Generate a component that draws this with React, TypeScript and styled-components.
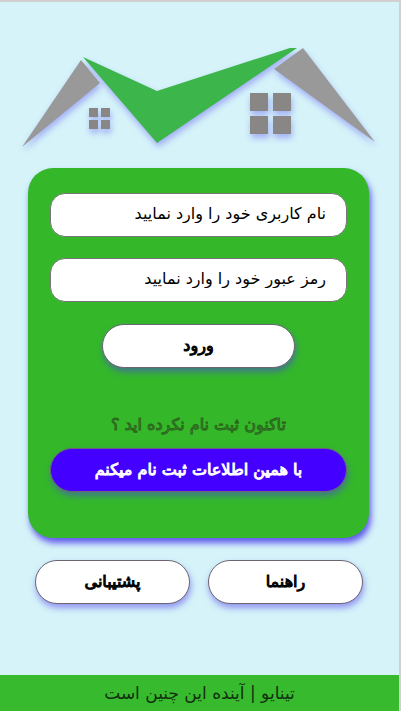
import React from "react";
import styled, { createGlobalStyle } from "styled-components";

const GlobalStyle = createGlobalStyle`
  *, *::before, *::after { box-sizing: border-box; }
  body { margin: 0; background: #d5f3f9; }
  body, button, input { font-family: "DejaVu Sans", sans-serif; }
`;

const Page = styled.div`
  min-height: 100vh;
  display: flex;
  flex-direction: column;
  border-top: 2px solid #d3cfd0;
  border-right: 2px solid #d3cfd0;
  background: #d5f3f9;
`;

const Logo = styled.svg`
  display: block;
  width: 100%;
  padding: 0 24px 0 22px;
  margin-top: 44px;
  overflow: visible;
  filter: drop-shadow(1px 4px 3px rgba(88, 70, 240, 0.4));
`;

const Main = styled.main`
  flex: 1;
  padding: 0 30px 0 28px;
`;

const Card = styled.form`
  display: flex;
  flex-direction: column;
  align-items: center;
  margin-top: 20px;
  padding: 25px 22px 46px;
  border-radius: 25px;
  background: #34b82a;
  box-shadow: 2px 5px 6px rgba(70, 50, 235, 0.8);
`;

const Fields = styled.div`
  display: flex;
  flex-direction: column;
  gap: 21px;
  width: 100%;
  margin-bottom: 22px;
`;

const Field = styled.input`
  width: 100%;
  height: 44px;
  padding: 0 20px 4px;
  border: 1px solid #767676;
  border-radius: 15px;
  background: #fff;
  color: #000;
  font-size: 16px;
  &::placeholder { color: #000; opacity: 1; }
`;

const Button = styled.button<{ $primary?: boolean; $width?: string }>`
  width: ${(p) => p.$width ?? "100%"};
  height: 44px;
  padding: 0 0 2px;
  border: 1px solid #6d6570;
  border-radius: 22px;
  background: ${(p) => (p.$primary ? "#4400ff" : "#fff")};
  color: ${(p) => (p.$primary ? "#fff" : "#000")};
  font-size: 16px;
  -webkit-text-stroke: 1px currentColor;
  white-space: nowrap;
  box-shadow: 1px 4px 6px rgba(80, 60, 235, 0.5);
`;

const Question = styled.p`
  margin: 42px 0 8px;
  line-height: 30px;
  font-size: 16px;
  color: #34a02a;
  -webkit-text-stroke: 1px #2c641d;
`;

const Links = styled.nav`
  display: flex;
  gap: 18px;
  margin: 22px 6px 24px 7px;
`;

const Footer = styled.footer`
  height: 36px;
  line-height: 36px;
  background: #38ba2f;
  color: #10300d;
  font-size: 17px;
  text-align: center;
`;

export default function App() {
  return (
    <Page dir="rtl" lang="fa">
      <GlobalStyle />
      <Logo viewBox="22 46 353 102" role="img" aria-label="تینایو">
        <path d="M81 60 L100 83 L22 147 Z" fill="#999" />
        <path d="M83 57 L157 91 L290 48 H297 L157 143 Z" fill="#3cb54b" />
        <path d="M303 48 L274 69 L375 142 Z" fill="#999" />
        <path d="M89 108h9v9h-9z M101 108h9v9h-9z M89 120h9v9h-9z M101 120h9v9h-9z" fill="#898785" />
        <path d="M250 93h18v18h-18z M273 93h18v18h-18z M250 116h18v18h-18z M273 116h18v18h-18z" fill="#898785" />
      </Logo>
      <Main>
        <Card onSubmit={(e) => e.preventDefault()}>
          <Fields>
            <Field type="text" aria-label="نام کاربری" placeholder="نام کاربری خود را وارد نمایید" />
            <Field type="password" aria-label="رمز عبور" placeholder="رمز عبور خود را وارد نمایید" />
          </Fields>
          <Button type="submit" $width="65%">ورود</Button>
          <Question>تاکنون ثبت نام نکرده اید ؟</Question>
          <Button type="button" $primary>با همین اطلاعات ثبت نام میکنم</Button>
        </Card>
        <Links>
          <Button type="button">راهنما</Button>
          <Button type="button">پشتیبانی</Button>
        </Links>
      </Main>
      <Footer>تینایو | آینده این چنین است</Footer>
    </Page>
  );
}
